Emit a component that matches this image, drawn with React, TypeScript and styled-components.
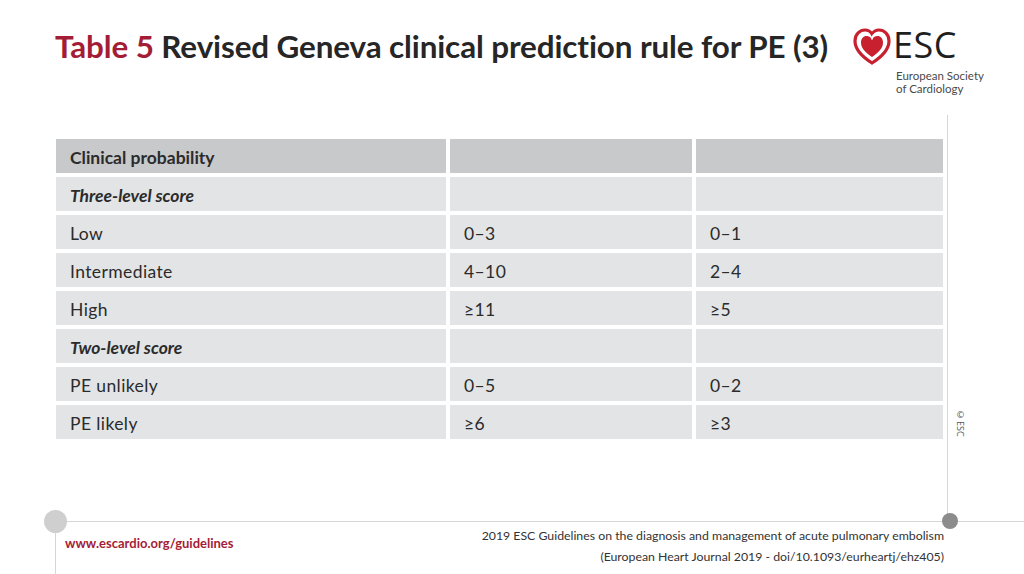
import styled, { createGlobalStyle } from 'styled-components';

const GlobalStyle = createGlobalStyle`
  html, body {
    margin: 0;
    padding: 0;
    background: #ffffff;
  }
  body {
    font-family: Lato, "Open Sans", "Liberation Sans", sans-serif;
    color: #2b2b2b;
  }
`;

interface Row {
  label: string;
  a: string;
  b: string;
  kind?: 'head' | 'section';
}

const rows: Row[] = [
  { label: 'Clinical probability', a: '', b: '', kind: 'head' },
  { label: 'Three-level score', a: '', b: '', kind: 'section' },
  { label: 'Low', a: '0–3', b: '0–1' },
  { label: 'Intermediate', a: '4–10', b: '2–4' },
  { label: 'High', a: '≥11', b: '≥5' },
  { label: 'Two-level score', a: '', b: '', kind: 'section' },
  { label: 'PE unlikely', a: '0–5', b: '0–2' },
  { label: 'PE likely', a: '≥6', b: '≥3' },
];

function HeartLogo() {
  return (
    <svg width="40" height="40" viewBox="0 0 40 40">
      <path
        d="M20 36 C9 29 3 22 3 14 C3 7 8 3 13 3 C16 3 18.5 4.5 20 7 C21.5 4.5 24 3 27 3 C32 3 37 7 37 14 C37 22 31 29 20 36 Z"
        fill="none"
        stroke="#c8202f"
        strokeWidth="3.2"
      />
      <path
        d="M20 30 C13 25 9 21 9 15.5 C9 11.5 11.5 9 14.5 9 C17 9 19 10.5 20 12.5 C21 10.5 23 9 25.5 9 C28.5 9 31 11.5 31 15.5 C31 21 27 25 20 30 Z"
        fill="#c8202f"
      />
      <path
        d="M20 12.5 C20 9 22 6.5 25 6.5"
        fill="none"
        stroke="#ffffff"
        strokeWidth="1.6"
      />
    </svg>
  );
}

export default function App() {
  return (
    <Page>
      <GlobalStyle />
      <Header>
        <Title>
          <Accent>Table 5</Accent> Revised Geneva clinical prediction rule for PE (3)
        </Title>
        <Logo>
          <HeartMark>
            <HeartLogo />
          </HeartMark>
          <LogoText>
            <LogoMark>ESC</LogoMark>
            <LogoSub>European Society</LogoSub>
            <LogoSub>of Cardiology</LogoSub>
          </LogoText>
        </Logo>
      </Header>

      <Content>
        <Table>
          {rows.map((r, i) => (
            <TableRow key={i}>
              <Cell $kind={r.kind}>{r.label}</Cell>
              <Cell $kind={r.kind}>{r.a}</Cell>
              <Cell $kind={r.kind}>{r.b}</Cell>
            </TableRow>
          ))}
        </Table>
        <Copyright>©ESC</Copyright>
      </Content>

      <Footer>
        <LeftDot />
        <RightDot />
        <Url>www.escardio.org/guidelines</Url>
        <Citation>
          <span>2019 ESC Guidelines on the diagnosis and management of acute pulmonary embolism</span>
          <span>(European Heart Journal 2019 - doi/10.1093/eurheartj/ehz405)</span>
        </Citation>
      </Footer>
    </Page>
  );
}

const Page = styled.div`
  width: 1024px;
  height: 574px;
  overflow: hidden;
  display: flex;
  flex-direction: column;
  background: #ffffff;
`;

const Header = styled.div`
  height: 115px;
  display: flex;
  align-items: flex-start;
  padding: 0 0 0 55px;
  box-sizing: border-box;
`;

const Title = styled.h1`
  margin: 26px 0 0;
  font-size: 31.4px;
  line-height: 40px;
  font-weight: 700;
  color: #262626;
  letter-spacing: -0.1px;
  white-space: nowrap;
`;

const Accent = styled.span`
  color: #a41d36;
`;

const Logo = styled.div`
  display: flex;
  align-items: flex-start;
  flex-shrink: 0;
  margin: 20px 41px 0 auto;
  gap: 1px;
`;

const HeartMark = styled.div`
  margin-top: 7px;
  height: 40px;
`;

const LogoText = styled.div`
  width: 90px;
  display: flex;
  flex-direction: column;
`;

const LogoMark = styled.span`
  font-family: "Open Sans", Lato, sans-serif;
  font-size: 36px;
  line-height: 49px;
  font-weight: 500;
  color: #1f1f1f;
  letter-spacing: 0.5px;
`;

const LogoSub = styled.span`
  font-family: Lato, "Open Sans", sans-serif;
  font-size: 11.5px;
  line-height: 13px;
  color: #4a4a4a;
  padding-left: 3px;
  white-space: nowrap;
`;

const Content = styled.div`
  margin-left: 56px;
  width: 892px;
  height: 406px;
  box-sizing: border-box;
  border-right: 1px solid #d6d6d6;
  padding-top: 24px;
  position: relative;
`;

const Table = styled.div`
  width: 887px;
  display: grid;
  grid-template-columns: 390px 242px 247px;
  column-gap: 4px;
  row-gap: 4px;
`;

const TableRow = styled.div`
  display: contents;
`;

const Cell = styled.div<{ $kind?: 'head' | 'section' }>`
  height: 34px;
  box-sizing: border-box;
  display: flex;
  align-items: center;
  padding: 2px 0 0 14px;
  font-size: 17.5px;
  color: #2b2b2b;
  background: ${(p) => (p.$kind === 'head' ? '#c8c9cb' : '#e2e4e6')};
  font-weight: ${(p) => (p.$kind ? 700 : 400)};
  font-style: ${(p) => (p.$kind === 'section' ? 'italic' : 'normal')};
  letter-spacing: ${(p) => (p.$kind ? '0' : '0.4px')};
`;

const Copyright = styled.span`
  position: absolute;
  right: -20px;
  top: 293px;
  writing-mode: vertical-rl;
  font-family: "Open Sans", sans-serif;
  font-size: 9px;
  color: #555;
`;

const Footer = styled.div`
  flex: 1;
  margin-left: 55px;
  border-top: 1px solid #d6d6d6;
  border-left: 1px solid #d6d6d6;
  position: relative;
  display: flex;
  justify-content: space-between;
  align-items: flex-start;
  padding: 3px 80px 0 9px;
`;

const LeftDot = styled.div`
  position: absolute;
  left: -12px;
  top: -12px;
  width: 23px;
  height: 23px;
  border-radius: 50%;
  background: #cfcfcf;
`;

const RightDot = styled.div`
  position: absolute;
  left: 886px;
  top: -9px;
  width: 16px;
  height: 16px;
  border-radius: 50%;
  background: #8c8c8c;
`;

const Url = styled.span`
  margin-top: 10px;
  font-size: 13px;
  font-weight: 700;
  color: #a41d36;
`;

const Citation = styled.div`
  display: flex;
  flex-direction: column;
  align-items: flex-end;
  font-size: 12.3px;
  line-height: 21px;
  color: #333;
`;
